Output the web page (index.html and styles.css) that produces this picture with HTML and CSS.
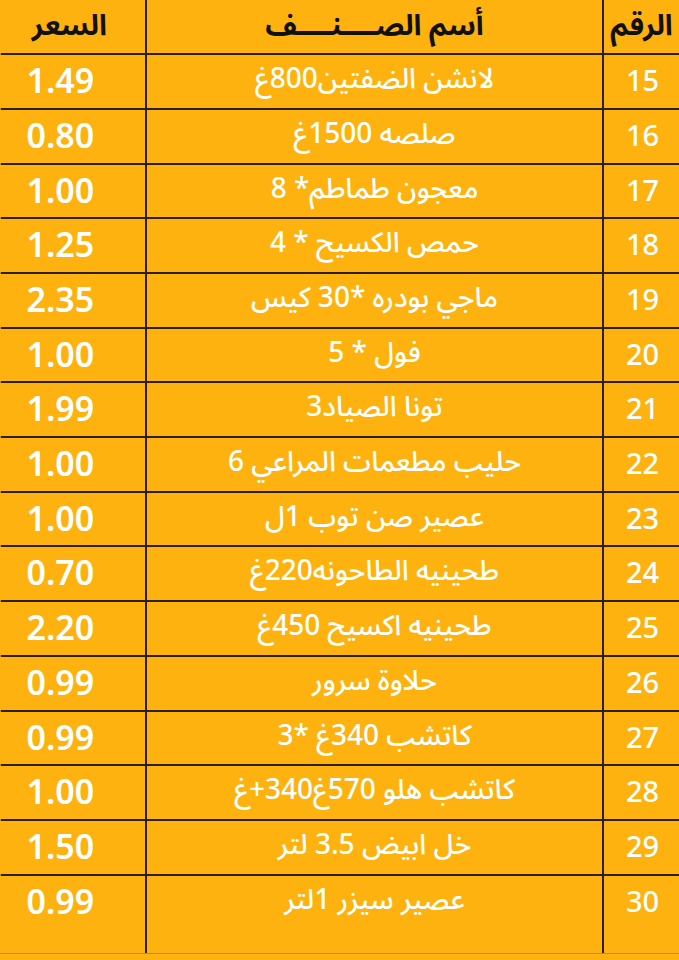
FILE: index.html
```html
<!DOCTYPE html>
<html lang="ar" dir="rtl">
<head>
<meta charset="utf-8">
<title>قائمة الأسعار</title>
<link rel="stylesheet" href="styles.css">
</head>
<body>
<div class="table">
  <div class="cell head num">الرقم</div>
  <div class="cell head name">أسم الصــــنــــف</div>
  <div class="cell head price">السعر</div>

  <div class="cell num">15</div><div class="cell name">لانشن الضفتين800غ</div><div class="cell price">1.49</div>
  <div class="cell num">16</div><div class="cell name">صلصه 1500غ</div><div class="cell price">0.80</div>
  <div class="cell num">17</div><div class="cell name">معجون طماطم* 8</div><div class="cell price">1.00</div>
  <div class="cell num">18</div><div class="cell name">حمص الكسيح * 4</div><div class="cell price">1.25</div>
  <div class="cell num">19</div><div class="cell name">ماجي بودره *30 كيس</div><div class="cell price">2.35</div>
  <div class="cell num">20</div><div class="cell name">فول * 5</div><div class="cell price">1.00</div>
  <div class="cell num">21</div><div class="cell name">تونا الصياد3</div><div class="cell price">1.99</div>
  <div class="cell num">22</div><div class="cell name">حليب مطعمات المراعي 6</div><div class="cell price">1.00</div>
  <div class="cell num">23</div><div class="cell name">عصير صن توب 1ل</div><div class="cell price">1.00</div>
  <div class="cell num">24</div><div class="cell name">طحينيه الطاحونه220غ</div><div class="cell price">0.70</div>
  <div class="cell num">25</div><div class="cell name">طحينيه اكسيح 450غ</div><div class="cell price">2.20</div>
  <div class="cell num">26</div><div class="cell name">حلاوة سرور</div><div class="cell price">0.99</div>
  <div class="cell num">27</div><div class="cell name">كاتشب 340غ *3</div><div class="cell price">0.99</div>
  <div class="cell num">28</div><div class="cell name">كاتشب هلو 570غ340+غ</div><div class="cell price">1.00</div>
  <div class="cell num">29</div><div class="cell name">خل ابيض 3.5 لتر</div><div class="cell price">1.50</div>
  <div class="cell num">30</div><div class="cell name">عصير سيزر 1لتر</div><div class="cell price">0.99</div>
</div>
</body>
</html>
```

FILE: styles.css
```css
html, body {
  margin: 0;
  padding: 0;
  background: #fdb20f;
}

body {
  width: 679px;
  height: 960px;
  overflow: hidden;
  font-family: "Noto Sans Arabic", "Noto Sans", "DejaVu Sans", sans-serif;
}

.table {
  direction: rtl;
  display: grid;
  grid-template-columns: 75px 455px 145.5px;
  grid-template-rows: 53.3px repeat(15, 52.7px) 1fr;
  column-gap: 2px;
  row-gap: 2px;
  height: 953px;
  background: #2e1f08;
  border-left: 1px solid #c98a10;
  border-bottom: 1px solid #c98a10;
}

.cell {
  background: #fdb20f;
  color: #ffffff;
  display: flex;
  justify-content: center;
  align-items: flex-start;
  height: 100%;
  line-height: 50px;
  white-space: nowrap;
}

.num {
  font-family: "Noto Sans", "DejaVu Sans", sans-serif;
  font-size: 29px;
  font-weight: 500;
  padding-left: 2px;
}

.name {
  font-size: 28px;
  font-weight: 500;
}

.price {
  font-family: "Noto Sans", "DejaVu Sans", sans-serif;
  font-size: 34px;
  font-weight: 600;
  justify-content: flex-end;
  padding-left: 27px;
}

.head {
  font-family: "Noto Sans Arabic", "Noto Sans", "DejaVu Sans", sans-serif;
  color: #111111;
  font-weight: 700;
  font-size: 29px;
  line-height: 52px;
}

.head.price {
  justify-content: center;
  padding-left: 0;
  padding-right: 6px;
}

.head.num {
  justify-content: center;
  padding-left: 0;
}
```
